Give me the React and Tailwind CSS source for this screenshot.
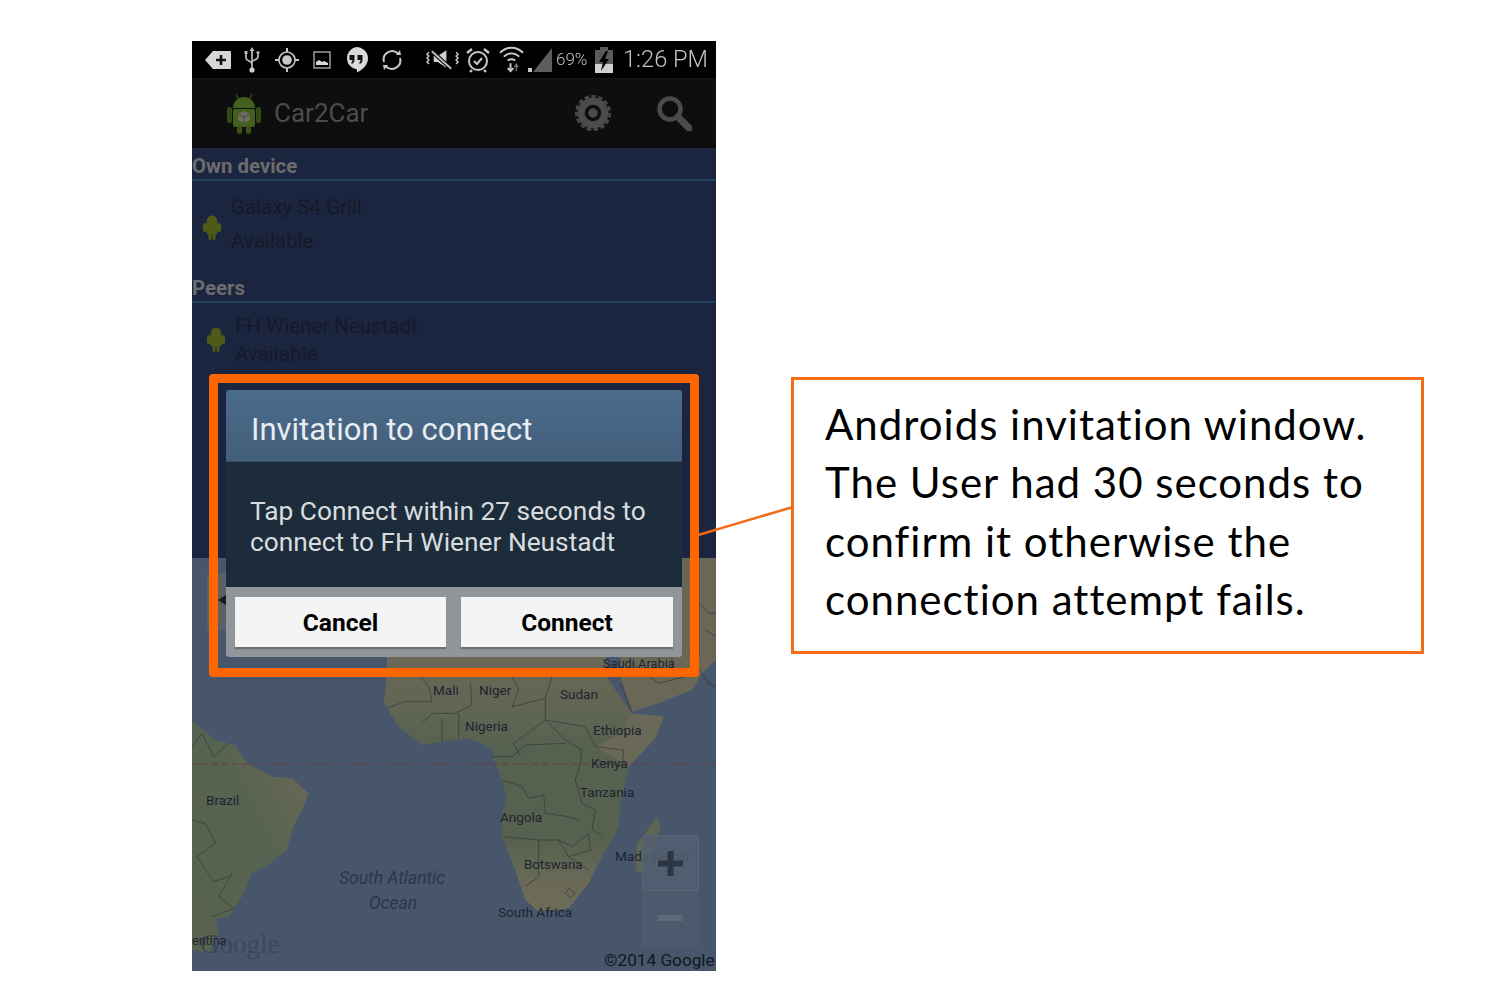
const roboto = { fontFamily: 'Roboto, sans-serif' }

function Robot({ className, fill = '#4f5a16' }) {
  return (
    <svg viewBox="0 0 18 25" className={`w-[18px] h-[25px] shrink-0 blur-[0.4px] ${className}`} fill={fill}>
      <path d="M3.500 8C3.500-2 14.500-2 14.500 8z" />
      <rect x="3.500" y="8" width="11" height="11" rx="1" />
      <rect x="0" y="8" width="4" height="9" rx="2" />
      <rect x="14" y="8" width="4" height="9" rx="2" />
      <rect x="5.500" y="18" width="3" height="7" rx="1.500" />
      <rect x="9.500" y="18" width="3" height="7" rx="1.500" />
    </svg>
  )
}

function StatusIcons() {
  return (
    <div className="flex items-center h-[37px] bg-black blur-[0.4px] text-[#c4c4c4]" style={roboto}>
      <svg viewBox="0 0 26 20" className="w-[26px] h-[20px] ml-[13px] shrink-0">
        <path d="M0 10 8 1h17a1 1 0 0 1 1 1v16a1 1 0 0 1-1 1H8z" fill="#d6d6d6" />
        <path d="M11 10h10M16 5v10" stroke="#111" strokeWidth="2.600" />
      </svg>
      <svg viewBox="0 0 16 26" className="w-[16px] h-[26px] ml-[13px] shrink-0" fill="none" stroke="#bdbdbd" strokeWidth="1.700">
        <path d="M8 2v20M2 7v4c0 3 6 3 6 6M14 7v3c0 3-6 3-6 5" />
        <path d="M8 0l2.500 4h-5z" fill="#bdbdbd" stroke="none" />
        <circle cx="8" cy="23" r="2.600" fill="#d0d0d0" stroke="none" />
        <rect x="0.500" y="4" width="3" height="3" fill="#bdbdbd" stroke="none" />
        <circle cx="14" cy="5.500" r="1.600" fill="#bdbdbd" stroke="none" />
      </svg>
      <svg viewBox="0 0 26 26" className="w-[26px] h-[26px] ml-[14px] shrink-0" fill="none" stroke="#c8c8c8" strokeWidth="1.600">
        <circle cx="13" cy="13" r="8" />
        <circle cx="13" cy="13" r="4.800" fill="#c8c8c8" stroke="none" />
        <path d="M13 1v4M13 21v4M1 13h4M21 13h4" strokeWidth="2" />
      </svg>
      <svg viewBox="0 0 18 18" className="w-[18px] h-[18px] ml-[13px] shrink-0" fill="none" stroke="#9c9c9c" strokeWidth="1.500">
        <rect x="1" y="1" width="16" height="16" />
        <path d="M3 14v-3l3-2 3 2 2-1 4 2v2z" fill="#d8d8d8" stroke="none" />
      </svg>
      <svg viewBox="0 0 24 26" className="w-[24px] h-[26px] ml-[13px] shrink-0">
        <path d="M12 0a12 11.500 0 0 1 12 11.500c0 6-5 11-11 14v-3A12 11.500 0 0 1 12 0z" fill="#dadada" />
        <path d="M5.500 8h5v5c0 2.500-1.500 3.500-3 4v-2c.7-.3 1-.8 1-2h-3zM13.500 8h5v5c0 2.500-1.500 3.500-3 4v-2c.7-.3 1-.8 1-2h-3z" fill="#111" />
      </svg>
      <svg viewBox="0 0 24 24" className="w-[24px] h-[24px] ml-[12px] shrink-0" fill="none" stroke="#c8c8c8" strokeWidth="2">
        <path d="M4 14a8.500 8.500 0 0 1 14-8.500M20 10a8.500 8.500 0 0 1-14 8.500" />
        <path d="M16 7h5l-1-5zM8 17H3l1 5z" fill="#c8c8c8" stroke="none" />
      </svg>
      <svg viewBox="0 0 36 24" className="w-[35px] h-[24px] ml-[21px] shrink-0" fill="none" stroke="#c4c4c4" strokeWidth="1.500">
        <path d="M9 8l4 0 9-6v18l-9-6-4 0z" fill="#d0d0d0" stroke="none" />
        <path d="M7 3l20 18" stroke="#000" strokeWidth="4" />
        <path d="M7 3l20 18" strokeWidth="1.800" />
        <path d="M4 4l-2 2 2 2-2 2 2 2-2 2 2 2M32 4l2 2-2 2 2 2-2 2 2 2-2 2" />
      </svg>
      <svg viewBox="0 0 24 26" className="w-[24px] h-[26px] ml-[6px] shrink-0" fill="none" stroke="#c8c8c8" strokeWidth="2">
        <circle cx="12" cy="14" r="9" />
        <path d="M8 14l3 3 5-6" />
        <path d="M1 6l5-4M23 6l-5-4M6 23l-2 2M18 23l2 2" strokeWidth="2.400" />
      </svg>
      <svg viewBox="0 0 26 28" className="w-[25px] h-[27px] ml-[9px] shrink-0" fill="none" stroke="#c8c8c8" strokeWidth="2">
        <path d="M1 7c7-7 17-7 24 0M5 11c5-4.500 11-4.500 16 0M9 15c3-2 5-2 8 0" />
        <path d="M12 18v8M9 23l3 3 3-3" />
        <path d="M18 26v-6M16 22l2-3 2 3" stroke="#777" strokeWidth="1.400" />
      </svg>
      <svg viewBox="0 0 24 24" className="w-[24px] h-[24px] ml-[4px] shrink-0">
        <path d="M24 0v24H5z" fill="#5d5d5d" />
        <path d="M0 24v-4h4v4z" fill="#c8c8c8" />
      </svg>
      <span className="ml-[4px] w-[33px] text-[17px] leading-none font-light shrink-0">69%</span>
      <svg viewBox="0 0 18 26" className="w-[18px] h-[26px] ml-[6px] shrink-0">
        <path d="M5 0h8v3h5v23H0V3h5z" fill="#5a5a5a" />
        <path d="M0 17h18v9H0z" fill="#cfcfcf" />
        <path d="M11 4 4 15h4l-2 9 8-12h-4l3-8z" fill="#000" />
      </svg>
      <span className="ml-[10px] text-[23.600px] leading-none font-light whitespace-nowrap">1:26 PM</span>
    </div>
  )
}

function ActionBar() {
  return (
    <div className="flex items-center h-[70px] bg-[#0e0e0e] pl-[35px] border-t border-[#151515]" style={roboto}>
      <svg viewBox="0 0 34 40" className="w-[34px] h-[40px] blur-[0.6px] shrink-0">
        <path d="M11 4 9 0M23 4l2-4" stroke="#3c541a" strokeWidth="1.200" />
        <path d="M6 14a11 11 0 0 1 22 0z" fill="#43601d" />
        <rect x="6" y="15" width="22" height="18" rx="2" fill="#43601d" />
        <rect x="0" y="13" width="5" height="16" rx="2.500" fill="#334b17" />
        <rect x="29" y="13" width="5" height="16" rx="2.500" fill="#334b17" />
        <rect x="10" y="32" width="5" height="8" rx="2.500" fill="#3b5419" />
        <rect x="19" y="32" width="5" height="8" rx="2.500" fill="#3b5419" />
        <path d="M17 17l6 3v6l-6 3-6-3v-6z" fill="#6e6e62" />
        <path d="M11 20l6 3 6-3M17 23v6" stroke="#454f34" fill="none" />
      </svg>
      <span className="ml-[13px] -mt-[2px] text-[26px] leading-none text-[#4c4c4c]">Car2Car</span>
      <svg viewBox="0 0 36 36" className="w-[36px] h-[36px] ml-[207px] -mt-[2px] shrink-0 blur-[0.6px]">
        <circle cx="18" cy="18" r="15.500" fill="#4b4b4b" />
        <circle cx="18" cy="18" r="16.800" fill="none" stroke="#4b4b4b" strokeWidth="2.400" strokeDasharray="4.500 2.500" />
        <circle cx="18" cy="18" r="6.500" fill="#4b4b4b" stroke="#0e0e0e" strokeWidth="3.500" />
      </svg>
      <svg viewBox="0 0 36 36" className="w-[36px] h-[36px] ml-[45px] -mt-[2px] shrink-0 blur-[0.4px]" fill="none" stroke="#4b4b4b">
        <circle cx="14" cy="14" r="10.500" strokeWidth="4.500" />
        <path d="M22 22l11 11" strokeWidth="7" strokeLinecap="round" />
      </svg>
    </div>
  )
}

function SectionHead({ children, height }) {
  return (
    <div className={`${height} flex items-end border-b-2 border-[#21425a] text-[20.400px] font-bold leading-[25px] text-[#6c6c6c]`}>
      {children}
    </div>
  )
}

function DeviceRow({ name, className, robotClass, textClass }) {
  return (
    <div className={`flex items-start gap-[10px] text-[20.500px] leading-[20px] text-[#141a28] ${className}`}>
      <Robot className={robotClass} />
      <div className={`flex flex-col ${textClass}`}>
        <span>{name}</span>
        <span>Available</span>
      </div>
    </div>
  )
}

function Label({ className, children }) {
  return <span className={`absolute whitespace-nowrap leading-none text-[#1d2430] ${className}`}>{children}</span>
}

function MapArea() {
  return (
    <div className="relative flex-1 overflow-hidden bg-[#47566b]" style={roboto}>
      <svg viewBox="0 -336 1572 1239" className="absolute inset-0 w-[524px] h-[413px] blur-[0.6px]">
        <defs>
          <linearGradient id="afr" x1="0" y1="0" x2="0" y2="1">
            <stop offset="0.30" stopColor="#6a6757" />
            <stop offset="0.42" stopColor="#616554" />
            <stop offset="0.55" stopColor="#566150" />
            <stop offset="0.80" stopColor="#57614f" />
            <stop offset="0.92" stopColor="#6a6a57" />
            <stop offset="1" stopColor="#6e6c59" />
          </linearGradient>
          <linearGradient id="sam" x1="1" y1="0" x2="0" y2="1">
            <stop offset="0.20" stopColor="#666656" />
            <stop offset="0.45" stopColor="#566350" />
            <stop offset="1" stopColor="#59634f" />
          </linearGradient>
        </defs>
        {/* africa */}
        <path d="M585-336 585 20 575 100 620 170 690 225 750 215 830 205 900 235 905 270 930 330 945 380 930 430 930 500 970 600 1000 690 1040 725 1130 715 1190 640 1225 570 1280 470 1285 400 1310 290 1390 205 1415 140 1320 130 1270 60 1245 20 1230-336z" fill="url(#afr)" />
        <path d="M1210 230 1310 290 1390 205 1415 140 1320 130 1290 190z" fill="#6a6857" />
        {/* arabia */}
        <path d="M1290-336 1285 20 1320 125 1400 100 1500 60 1530 10 1572-30 1572-336z" fill="#6a6757" />
        {/* south america */}
        <path d="M0 150 40 185 70 210 130 225 165 280 240 320 300 325 350 370 330 420 300 480 285 540 220 590 180 610 150 680 110 740 70 745 80 790 50 850 0 840z" fill="url(#sam)" />
        {/* madagascar */}
        <path d="M1395 440 1405 470 1380 560 1345 610 1330 600 1335 520 1360 490z" fill="#5c6650" />
        {/* borders */}
        <g fill="none" stroke="#2f3838" strokeWidth="2">
          <path d="M1521-336V-40L1490-60M1521 0 1550 40 1572 50M1521-200l30 30 21 0M1540-120l32 20" />
          <path d="M685 20 710 50 720 95 640 95 580 115M835 40 840 105 790 130 720 130 690 160M960 20 980 60 960 110 1060 85 1080 20M1060 85 1060 150 1000 195 965 220 985 260M1060 150 1120 210 1170 240 1165 280 1150 330 1170 400 1210 420 1200 480 1230 495M1060 150 1180 170 1210 230 1295 240 1290 290 1210 270" />
          <path d="M800 130 800 205M750 145 750 215M900 260 960 260 1000 225 1120 220M930 330 990 350 1010 385 1055 375 1060 430 1130 440 1160 450M930 500 1040 510 1060 510 1100 510 1140 530 1190 490 1195 540 1130 560M1040 510 1040 620 1000 650M1100 510 1130 560 1190 600M1130 655l20 15-15 12-15-12z" />
          <path d="M0 230 30 190 65 260 110 220M0 450 40 460 70 520 15 560 65 635 110 620 120 610 80 680 125 715 60 740" />
          <path d="M1285 40 1320 125M1440-40 1440 20 1500 20M1320-20 1400 40 1480 20" />
        </g>
        <path d="M0 283H1572" stroke="#6a3a42" strokeWidth="2.500" strokeDasharray="19 11" fill="none" />
      </svg>

      {/* collapsed panel handle on the left */}
      <div className="absolute left-[15px] top-[15px] w-[30px] h-[57px] rounded-[2px] bg-[#5a5f68]" />
      <div className="absolute left-[26px] top-[37px] border-y-[5px] border-r-[8px] border-y-transparent border-r-[#15181d]" />

      <Label className="left-[411px] top-[100px] text-[12.800px]">Saudi Arabia</Label>
      <Label className="left-[241px] top-[126px] text-[13.500px]">Mali</Label>
      <Label className="left-[287px] top-[126px] text-[13.500px]">Niger</Label>
      <Label className="left-[368px] top-[130px] text-[13.500px]">Sudan</Label>
      <Label className="left-[273px] top-[162px] text-[13.500px]">Nigeria</Label>
      <Label className="left-[401px] top-[166px] text-[13.500px]">Ethiopia</Label>
      <Label className="left-[399px] top-[199px] text-[13.500px]">Kenya</Label>
      <Label className="left-[388px] top-[228px] text-[13.500px]">Tanzania</Label>
      <Label className="left-[308px] top-[253px] text-[13.500px]">Angola</Label>
      <Label className="left-[14px] top-[236px] text-[13.500px]">Brazil</Label>
      <Label className="left-[332px] top-[300px] text-[13.200px]">Botswana</Label>
      <Label className="left-[306px] top-[348px] text-[13.500px]">South Africa</Label>
      <Label className="left-[423px] top-[292px] text-[13.500px]">Madagascar</Label>
      <Label className="left-[147px] top-[312px] text-[17.500px] italic text-[#2b374a]">South Atlantic</Label>
      <Label className="left-[177px] top-[337px] text-[17.500px] italic text-[#2b374a]">Ocean</Label>

      <span className="absolute left-[8px] top-[373px] text-[27px] leading-none text-[#3a485c]" style={{ fontFamily: '"Liberation Serif", serif' }}>Google</span>
      <Label className="left-0 top-[377px] text-[12.500px]">entina</Label>
      <span className="absolute left-[412px] top-[394px] text-[17.200px] leading-none text-[#12171f] whitespace-nowrap">©2014 Google</span>

      {/* zoom buttons */}
      <div className="absolute left-[450px] top-[277px] w-[57px] flex flex-col">
        <div className="h-[56px] flex items-center justify-center rounded-t-[2px] border border-[#5d6673] bg-[#535f72]/85">
          <svg viewBox="0 0 25 25" className="w-[25px] h-[25px]"><path d="M9.500 0h6v9.500H25v6h-9.500V25h-6v-9.500H0v-6h9.500z" fill="#2d3640" /></svg>
        </div>
        <div className="h-[55px] flex items-center justify-center rounded-b-[2px] border border-t-0 border-[#4f5b6c] bg-[#4d5a6e]/85">
          <div className="w-[25px] h-[6px] bg-[#5f6978]" />
        </div>
      </div>
    </div>
  )
}

function Dialog() {
  return (
    <div className="flex flex-col h-[267px] rounded-[3px] overflow-hidden" style={roboto}>
      <div className="h-[72px] flex items-center pl-[25px] pt-[8px] bg-gradient-to-b from-[#4b6b8b] to-[#425f7b] border-b border-[#3a5064] text-[31px] leading-none text-[#e8edf1]">
        Invitation to connect
      </div>
      <div className="h-[125px] pl-[24px] pt-[34px] bg-[#1c2c3b] text-[26.300px] leading-[31px] text-[#d9dcde]">
        <p>Tap Connect within 27 seconds to</p>
        <p>connect to FH Wiener Neustadt</p>
      </div>
      <div className="flex-1 flex gap-[15px] px-[9px] pt-[10px] bg-[#90969a]">
        <button className="w-[211px] h-[50px] pt-[3px] bg-[#f4f4f4] shadow-[0_2px_1px_#6c7073] text-[24.500px] font-bold text-black">Cancel</button>
        <button className="w-[212px] h-[50px] pt-[3px] bg-[#f4f4f4] shadow-[0_2px_1px_#6c7073] text-[24.500px] font-bold text-black">Connect</button>
      </div>
    </div>
  )
}

export default function App() {
  return (
    <div className="relative min-h-screen bg-white flex items-start pl-[192px] pt-[41px] gap-[75px]">
      {/* phone */}
      <div className="relative w-[524px] h-[930px] flex flex-col shrink-0 overflow-hidden" style={roboto}>
        <StatusIcons />
        <ActionBar />
        <div className="h-[410px] bg-[#1b2540]">
          <SectionHead height="h-[33px]">Own device</SectionHead>
          <DeviceRow name="Galaxy S4 Grill" className="h-[90px] pl-[11px] pt-[16px]" robotClass="mt-[18px]" textClass="gap-[14px]" />
          <SectionHead height="h-[32px]">Peers</SectionHead>
          <DeviceRow name="FH Wiener Neustadt" className="pl-[15px] pt-[13px]" robotClass="mt-[11px]" textClass="gap-[8px]" />
        </div>
        <MapArea />

        {/* orange highlight around the dialog */}
        <div className="absolute left-[17px] top-[333px] w-[490px] h-[303px] rounded-[4px] border-[9px] border-[#ff6600] px-[8px] pt-[7px]">
          <Dialog />
        </div>
      </div>

      {/* connector line */}
      <svg className="absolute left-[698px] top-[505px] w-[96px] h-[32px]" viewBox="0 0 96 32">
        <path d="M0 30 95 2" stroke="#f36c17" strokeWidth="2.500" fill="none" />
      </svg>

      {/* callout */}
      <div
        className="mt-[336px] w-[633px] h-[277px] border-[3px] border-[#f36c17] pl-[31px] pt-[15px] text-[42px] tracking-[1px] leading-[58.300px] text-black bg-white relative"
        style={{ fontFamily: 'Lato, sans-serif' }}
      >
        <p className="whitespace-nowrap">Androids invitation window.</p>
        <p className="whitespace-nowrap">The User had 30 seconds to</p>
        <p className="whitespace-nowrap">confirm it otherwise the</p>
        <p className="whitespace-nowrap">connection attempt fails.</p>
      </div>
    </div>
  )
}
